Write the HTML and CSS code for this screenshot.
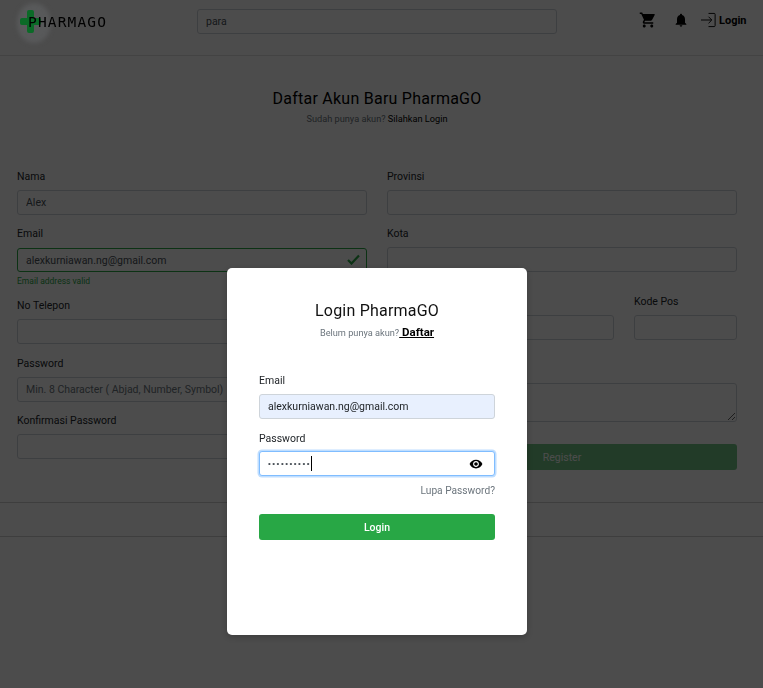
FILE: index.html
```html
<!DOCTYPE html>
<html lang="id">
<head>
<meta charset="utf-8">
<title>PharmaGO</title>
<link rel="stylesheet" href="styles.css">
</head>
<body>
<header class="nav">
  <div class="logo">
    <span class="logo-disc"></span>
    <svg class="logo-cross" width="21" height="23" viewBox="0 0 21 23"><path d="M7 2a2 2 0 0 1 2-2h3a2 2 0 0 1 2 2v6h5a2 2 0 0 1 2 2v3a2 2 0 0 1-2 2h-5v6a2 2 0 0 1-2 2H9a2 2 0 0 1-2-2v-6H2a2 2 0 0 1-2-2v-3a2 2 0 0 1 2-2h5z" fill="#0b6a27"/></svg>
    <span class="logo-text">PHARMAGO</span>
  </div>
  <input class="search" type="text" value="para">
  <div class="nav-icons">
    <svg class="ic-cart" width="18" height="18" viewBox="0 0 24 24"><path d="M7 18c-1.100 0-1.990.9-1.990 2S5.900 22 7 22s2-.9 2-2-.9-2-2-2zM1 2v2h2l3.600 7.590-1.350 2.450c-.16.28-.25.61-.25.96 0 1.100.9 2 2 2h12v-2H7.420a.25.25 0 0 1-.25-.25l.03-.12.9-1.630h7.450c.75 0 1.410-.41 1.750-1.030l3.580-6.490A1 1 0 0 0 20 4H5.210l-.94-2H1zm16 16c-1.100 0-1.990.9-1.990 2s.89 2 1.990 2 2-.9 2-2-.9-2-2-2z" fill="#000"/></svg>
    <svg class="ic-bell" width="16" height="16" viewBox="0 0 24 24"><path d="M12 22c1.100 0 2-.9 2-2h-4c0 1.100.9 2 2 2zm6-6v-5c0-3.070-1.630-5.640-4.500-6.320V4c0-.83-.67-1.500-1.500-1.500s-1.500.67-1.500 1.500v.68C7.640 5.360 6 7.920 6 11v5l-2 2v1h16v-1l-2-2z" fill="#000"/></svg>
    <svg class="ic-login" width="16" height="16" viewBox="0 0 17 17"><path d="M0 8.500h11M8 5l3.500 3.500L8 12M8 1.500h6a1 1 0 0 1 1 1v12a1 1 0 0 1-1 1H8" fill="none" stroke="#000" stroke-width="1"/></svg>
    <span class="nav-login">Login</span>
  </div>
</header>

<main class="page">
  <div class="heading">
    <h1>Daftar Akun Baru PharmaGO</h1>
    <p>Sudah punya akun? <a>Silahkan Login</a></p>
  </div>
  <form class="reg">
    <div class="col">
      <div class="field"><label>Nama</label><input type="text" value="Alex"></div>
      <div class="field f-email"><label>Email</label>
        <div class="valid-wrap">
          <input class="valid" type="text" value="alexkurniawan.ng@gmail.com">
          <svg class="check" width="13" height="11" viewBox="0 0 13 11"><path d="M1 6l3.500 3.500L12 1.500" fill="none" stroke="#28a745" stroke-width="2.200"/></svg>
        </div>
        <span class="feedback">Email address valid</span>
      </div>
      <div class="field f-tel"><label>No Telepon</label><input type="text"></div>
      <div class="field f-pass"><label>Password</label><input type="text" placeholder="Min. 8 Character ( Abjad, Number, Symbol)"></div>
      <div class="field f-conf"><label>Konfirmasi Password</label><input type="text"></div>
    </div>
    <div class="col">
      <div class="field"><label>Provinsi</label><input type="text"></div>
      <div class="field f-kota"><label>Kota</label><input type="text"></div>
      <div class="split">
        <div class="field"><label>&nbsp;</label><input type="text"></div>
        <div class="field f-pos"><label>Kode Pos</label><input type="text"></div>
      </div>
      <div class="field f-alamat"><label>&nbsp;</label><textarea></textarea></div>
      <button class="register" type="button" disabled>Register</button>
    </div>
  </form>
  <div class="foot"></div>
</main>

<div class="backdrop"></div>
<div class="modal-wrap">
  <div class="modal">
    <h2>Login PharmaGO</h2>
    <p class="sub"><span>Belum punya akun?</span><a>&nbsp;Daftar</a></p>
    <label class="m-label m-label-email">Email</label>
    <input class="m-input filled" type="text" value="alexkurniawan.ng@gmail.com">
    <label class="m-label m-label-pass">Password</label>
    <div class="pass-wrap">
      <span class="dots">••••••••••</span><span class="caret"></span>
      <svg class="eye" width="14" height="14" viewBox="0 0 24 24"><path d="M12 4.500C7 4.500 2.730 7.610 1 12c1.730 4.390 6 7.500 11 7.500s9.270-3.110 11-7.500c-1.730-4.390-6-7.500-11-7.500zM12 17c-2.760 0-5-2.240-5-5s2.240-5 5-5 5 2.240 5 5-2.240 5-5 5zm0-8c-1.660 0-3 1.340-3 3s1.340 3 3 3 3-1.340 3-3-1.340-3-3-3z" fill="#000"/></svg>
    </div>
    <a class="forgot">Lupa Password?</a>
    <button class="m-btn" type="button">Login</button>
  </div>
</div>
</body>
</html>
```
FILE: styles.css
```css
* { box-sizing: border-box; }
html, body { margin: 0; height: 100%; }
body {
  background: #fff;
  color: #212529;
  font-family: Roboto, "Noto Sans", sans-serif;
  font-size: 10.500px;
  overflow: hidden;
}
input, textarea, button { font-family: inherit; }

.nav {
  height: 56px;
  border-bottom: 1px solid #dfdfdf;
  display: flex;
  align-items: center;
  position: relative;
}
.logo {
  width: 197px;
  height: 56px;
  position: relative;
  z-index: 1;
  flex: none;
}
.logo-disc {
  position: absolute;
  left: 17px; top: 3px;
  width: 34px; height: 40px;
  border-radius: 50%;
  background: #58595a;
  filter: blur(2px);
}
.logo-cross {
  position: absolute;
  left: 20px; top: 10px;
}
.logo-text {
  position: absolute;
  left: 28px; top: 12px;
  font-family: "DejaVu Sans Mono", monospace;
  font-size: 14.500px;
  line-height: 20px;
  letter-spacing: 1.150px;
  color: #000;
}
.search {
  width: 360px;
  height: 25px;
  margin-top: -12px;
  border: 1px solid #ced4da;
  border-radius: 3px;
  padding: 0 8px;
  font-size: 10.500px;
  color: #495057;
  background: #fff;
}
.nav-icons {
  margin-left: 82px;
  margin-top: -15px;
  display: flex;
  align-items: center;
  color: #000;
}
.ic-bell { margin-left: 16px; }
.ic-login { margin-left: 12px; }
.nav-login { font-weight: 700; font-size: 11px; margin-left: 2px; }

.heading { text-align: center; padding: 32px 9px 0 0; height: 112px; }
.heading h1 { margin: 0; font-size: 16px; line-height: 21px; font-weight: 400; color: #000; letter-spacing: .25px; }
.heading p { margin: 3px 0 0; font-size: 9.200px; line-height: 14px; color: #6c757d; }
.heading a { color: #000; }

.reg {
  display: grid;
  grid-template-columns: 350px 350px;
  column-gap: 20px;
  padding-left: 17px;
  height: 335px;
  border-bottom: 1px solid #cfcfcf;
}
.field label { display: block; font-size: 10.500px; line-height: 15px; padding-top: 1px; height: 16px; margin-bottom: 6px; color: #212529; }
.field input, .field textarea {
  display: block;
  width: 100%;
  height: 25px;
  border: 1px solid #ced4da;
  border-radius: 3px;
  padding: 0 8px;
  font-size: 10.500px;
  color: #495057;
  background: #fff;
}
.field input::placeholder { color: #6c757d; opacity: 1; }
.f-email { margin-top: 10px; }
.f-kota { margin-top: 10px; }
.f-tel { margin-top: 10px; }
.f-pass { margin-top: 11px; }
.f-conf { margin-top: 10px; }
.valid-wrap { position: relative; margin-top: 7px; }
.field input.valid { border-color: #28a745; height: 24px; }
.check { position: absolute; right: 7px; top: 6px; }
.feedback { display: block; font-size: 8.500px; line-height: 11px; margin-top: 4px; color: #28a745; }
.split { display: flex; gap: 20px; margin-top: 21px; }
.split .field { flex: 1; }
.split .field.f-pos { flex: none; width: 103px; }
.f-alamat { margin-top: 21px; }
.field textarea { height: 39px; resize: both; }
.register {
  display: block;
  width: 100%;
  height: 26px;
  margin-top: 22px;
  border: 0;
  border-radius: 3px;
  background: #28a745;
  color: #fff;
  font-size: 10.500px;
  opacity: .65;
}
.foot { height: 34px; border-bottom: 1px solid #cfcfcf; }

.backdrop {
  position: fixed;
  inset: 0;
  background: rgba(0, 0, 0, .7);
}
.modal-wrap {
  position: fixed;
  inset: 0;
  z-index: 2;
  padding: 268px 0 0 227px;
}
.modal {
  width: 300px;
  height: 367px;
  background: #fff;
  border-radius: 5px;
  padding: 32px 32px 0;
  display: flex;
  flex-direction: column;
  box-shadow: 0 2px 6px rgba(0,0,0,.2);
}
.modal h2 { margin: 0; font-size: 16px; line-height: 22px; font-weight: 400; text-align: center; color: #111; letter-spacing: .2px; }
.sub { margin: 2px 0 0; display: flex; justify-content: center; align-items: baseline; font-size: 9.200px; line-height: 17px; color: #6c757d; }
.sub a { font-size: 11.500px; font-weight: 700; color: #000; text-decoration: underline; }
.m-label { font-size: 10.500px; line-height: 15px; color: #212529; }
.m-label-email { margin-top: 32px; }
.m-label-pass { margin-top: 12px; }
.m-input {
  height: 25px;
  margin-top: 6px;
  border: 1px solid #ced4da;
  border-radius: 3px;
  padding: 0 8px;
  font-size: 10.500px;
  color: #212529;
}
.filled { background: #e8f0fe; }
.pass-wrap {
  height: 25px;
  margin-top: 5px;
  border: 1px solid #80bdff;
  border-radius: 3px;
  box-shadow: 0 0 0 1.500px rgba(0,123,255,.25);
  padding: 0 8px;
  display: flex;
  align-items: center;
  background: #fff;
}
.dots { font-family: "Liberation Sans", sans-serif; font-size: 8px; color: #495057; letter-spacing: 1.500px; }
.caret { width: 1px; height: 15px; background: #000; margin-left: 0; }
.eye { margin-left: auto; margin-right: 3px; }
.forgot { align-self: flex-end; margin-top: 7px; font-size: 10.200px; line-height: 15px; color: #6c757d; }
.m-btn {
  height: 26px;
  margin-top: 16px;
  border: 0;
  border-radius: 3px;
  background: #28a745;
  color: #fff;
  font-size: 10.500px;
  font-weight: 500;
}
```
